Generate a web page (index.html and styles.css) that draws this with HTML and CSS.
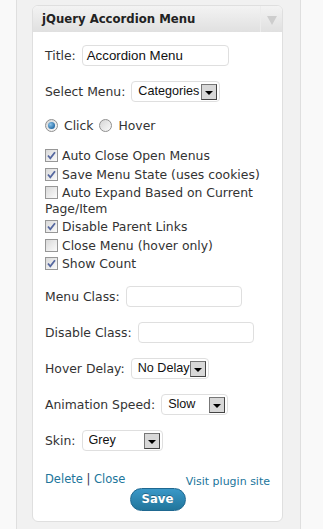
FILE: index.html
```html
<!DOCTYPE html>
<html lang="en">
<head>
    <meta charset="UTF-8">
    <meta name="viewport" content="width=device-width, initial-scale=1.0">
    <link rel="stylesheet" href="styles.css">
</head>
<body>
    <div class="page">
        <div class="sidebar">
            <div class="widget">
                <div class="widget-top">
                    <h4>jQuery Accordion Menu</h4>
                    <span class="toggle"><span class="arrow"></span></span>
                </div>

                <div class="widget-inside">
                    <div class="field">
                        <span class="label">Title:</span>
                        <span class="text-input title-input">Accordion Menu</span>
                    </div>

                    <div class="field">
                        <span class="label">Select Menu:</span>
                        <span class="select menu-select"><span class="value">Categories</span><span class="btn"></span></span>
                    </div>

                    <div class="radios">
                        <span class="radio on"></span>Click
                        <span class="radio"></span>Hover
                    </div>

                    <div class="options">
                        <div class="opt"><span class="cb on"><svg width="11" height="11" viewBox="0 0 11 11"><path d="M2 5.5 L4.3 8.3 L9 2.2" /></svg></span>Auto Close Open Menus</div>
                        <div class="opt"><span class="cb on"><svg width="11" height="11" viewBox="0 0 11 11"><path d="M2 5.5 L4.3 8.3 L9 2.2" /></svg></span>Save Menu State (uses cookies)</div>
                        <div class="opt"><span class="cb"></span>Auto Expand Based on Current Page/Item</div>
                        <div class="opt"><span class="cb on"><svg width="11" height="11" viewBox="0 0 11 11"><path d="M2 5.5 L4.3 8.3 L9 2.2" /></svg></span>Disable Parent Links</div>
                        <div class="opt"><span class="cb"></span>Close Menu (hover only)</div>
                        <div class="opt"><span class="cb on"><svg width="11" height="11" viewBox="0 0 11 11"><path d="M2 5.5 L4.3 8.3 L9 2.2" /></svg></span>Show Count</div>
                    </div>

                    <div class="field">
                        <span class="label">Menu Class:</span>
                        <span class="text-input class-input"></span>
                    </div>

                    <div class="field">
                        <span class="label">Disable Class:</span>
                        <span class="text-input class-input"></span>
                    </div>

                    <div class="field">
                        <span class="label">Hover Delay:</span>
                        <span class="select delay-select"><span class="value">No Delay</span><span class="btn"></span></span>
                    </div>

                    <div class="field">
                        <span class="label">Animation Speed:</span>
                        <span class="select speed-select"><span class="value">Slow</span><span class="btn"></span></span>
                    </div>

                    <div class="field skin-field">
                        <span class="label">Skin:</span>
                        <span class="select skin-select"><span class="value">Grey</span><span class="btn"></span></span>
                    </div>

                    <div class="controls">
                        <div class="links"><a href="#">Delete</a> <span class="sep">|</span> <a href="#">Close</a></div>
                        <a href="#" class="visit">Visit plugin site</a>
                    </div>

                    <div class="save-row">
                        <span class="save">Save</span>
                    </div>
                </div>
            </div>
        </div>
    </div>
</body>
</html>
```

FILE: styles.css
```css
* {
    box-sizing: border-box;
}
body {
    margin: 0;
    font-family: "DejaVu Sans", Verdana, sans-serif;
    font-size: 12.4px;
    color: #333;
    background-color: #f9f9f9;
}
.page {
    display: flex;
    min-height: 529px;
    padding-left: 16px;
}
.sidebar {
    width: 285px;
    background-color: #f1f1f1;
    border-left: 1px solid #dfdfdf;
    border-right: 1px solid #dfdfdf;
    padding: 5px 17px 0 15px;
}
.widget {
    background-color: #fff;
    border: 1px solid #dfdfdf;
    border-radius: 6px;
}
.widget-top {
    display: flex;
    height: 26px;
    background: linear-gradient(#f3f3f3, #e0e0e0);
    border-radius: 5px 5px 0 0;
}
.widget-top h4 {
    flex: 1;
    margin: 0;
    padding-left: 9px;
    font-size: 11.7px;
    line-height: 26px;
    color: #222;
}
.toggle {
    width: 22px;
    border-left: 1px solid #ececec;
    display: flex;
    justify-content: center;
    padding-top: 10px;
}
.arrow {
    width: 0;
    height: 0;
    border-left: 5px solid transparent;
    border-right: 5px solid transparent;
    border-top: 9px solid #cdcdcd;
}
.widget-inside {
    padding: 13px 12px 10px 12px;
}
.field {
    display: flex;
    align-items: center;
    gap: 6px;
    height: 21px;
    margin-bottom: 15px;
}
.skin-field {
    margin-top: 1px;
}
.label {
    white-space: nowrap;
}
.text-input,
.select {
    height: 21px;
    border: 1px solid #dfdfdf;
    border-radius: 4px;
    background-color: #fff;
    font-family: "Liberation Sans", Arial, sans-serif;
    color: #111;
    line-height: 19px;
}
.text-input {
    padding-left: 4px;
    font-size: 13.3px;
}
.title-input {
    width: 147px;
}
.class-input {
    width: 116px;
}
.select {
    display: flex;
    align-items: center;
    padding-left: 6px;
    padding-right: 2px;
    font-size: 12.6px;
}
.select .value {
    flex: 1;
    overflow: hidden;
    white-space: nowrap;
}
.select .btn {
    width: 16px;
    height: 16px;
    flex: none;
    background-color: #d8d8d8;
    border: 1px solid;
    border-color: #777 #444 #444 #777;
    display: flex;
    justify-content: center;
    align-items: center;
}
.select .btn::after {
    content: "";
    margin-top: 2px;
    border-left: 4px solid transparent;
    border-right: 4px solid transparent;
    border-top: 4px solid #000;
}
.menu-select {
    width: 89px;
}
.delay-select {
    width: 78px;
}
.speed-select {
    width: 67px;
}
.skin-select {
    width: 81px;
}
.radios {
    height: 18px;
    line-height: 18px;
    margin-bottom: 12px;
}
.radio {
    display: inline-block;
    width: 13px;
    height: 13px;
    border: 1px solid #8f8f8f;
    border-radius: 50%;
    background: linear-gradient(135deg, #d6d6d6, #fafafa);
    vertical-align: -2px;
    margin-right: 6px;
    position: relative;
}
.radios .radio:nth-of-type(2) {
    margin-left: 2px;
}
.radio.on::after {
    content: "";
    position: absolute;
    left: 2px;
    top: 2px;
    width: 7px;
    height: 7px;
    border-radius: 50%;
    background: radial-gradient(circle at 35% 35%, #8cc4ea, #2a6fa8 70%);
}
.options {
    margin-bottom: 13px;
}
.opt {
    line-height: 16px;
    padding: 1.2px 0;
}
.cb {
    display: inline-block;
    width: 13px;
    height: 13px;
    border: 1px solid #979797;
    background: linear-gradient(135deg, #d9d9d9, #fbfbfb);
    vertical-align: -2px;
    margin-right: 4px;
}
.cb svg {
    display: block;
}
.cb path {
    fill: none;
    stroke: #55679f;
    stroke-width: 1.8;
}
.controls {
    display: flex;
    justify-content: space-between;
    margin-top: 20px;
    height: 17px;
}
.links {
    font-size: 11.5px;
    line-height: 16px;
}
a {
    color: #21759b;
    text-decoration: none;
}
.sep {
    color: #3a3350;
}
.visit {
    font-size: 11px;
    line-height: 16px;
    padding-top: 3px;
}
.save-row {
    display: flex;
    justify-content: center;
}
.save {
    width: 56px;
    height: 23px;
    border: 1px solid #1f6890;
    border-radius: 12px;
    background: linear-gradient(#3a98c8, #21759b);
    color: #fff;
    font-weight: bold;
    font-size: 11.7px;
    line-height: 21px;
    text-align: center;
    text-shadow: 0 -1px 0 rgba(0, 0, 0, 0.3);
}
```
